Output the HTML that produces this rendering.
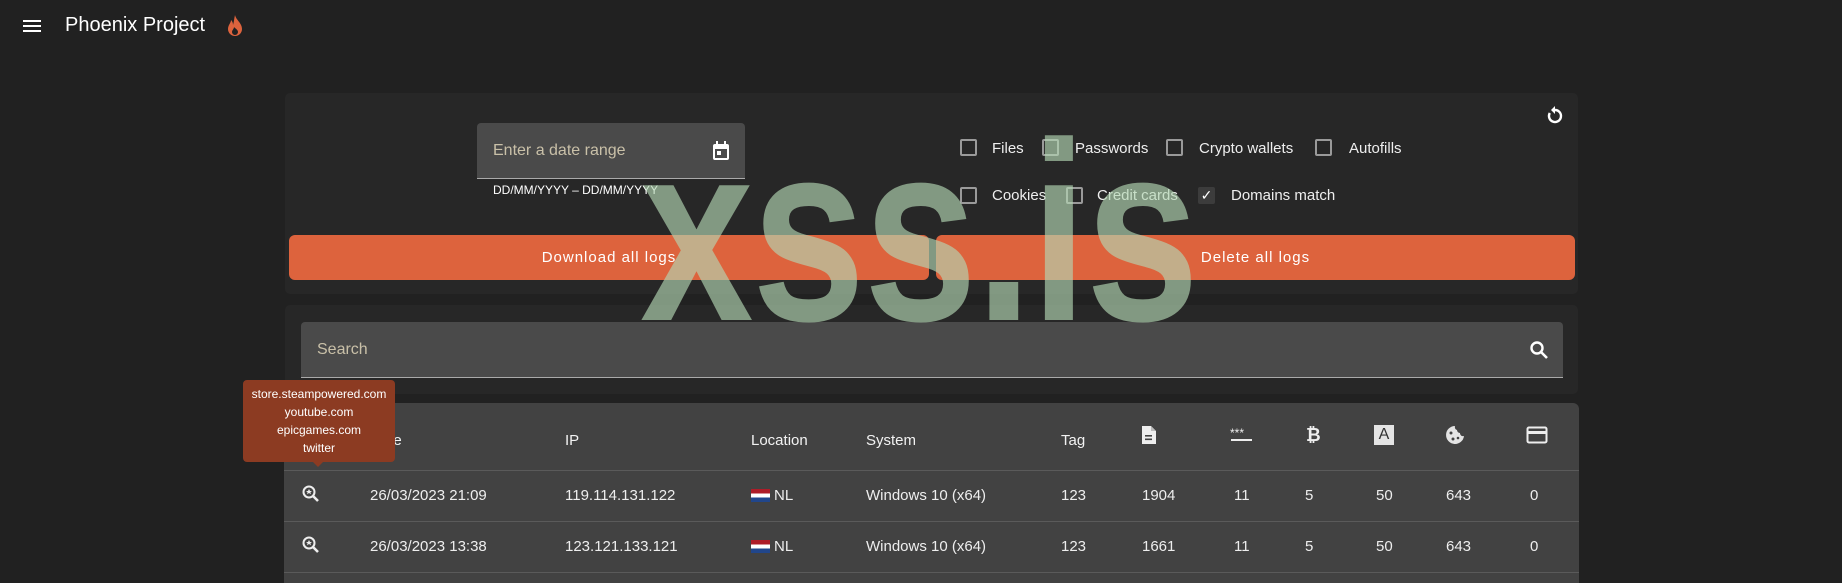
<!DOCTYPE html>
<html><head><meta charset="utf-8"><style>
*{box-sizing:border-box;margin:0;padding:0}
body{width:1842px;height:575px;background:#212121;font-family:"Liberation Sans",sans-serif;color:#eee;position:relative;overflow:hidden;font-size:15px}
.a{position:absolute}
.panel{background:#272727;border-radius:5px}
.field{background:#4a4a4a;border-radius:4px 4px 0 0;border-bottom:1px solid #aaa}
.cb{position:absolute;width:17px;height:17px;border:2px solid #9a9a9a;border-radius:2px}
.btn{position:absolute;top:235px;height:45px;background:#dd633d;border-radius:6px;color:#fff;font-size:15px;letter-spacing:1px;text-align:center;line-height:45px}
.th{position:absolute;top:432px;font-size:15px;color:#f2f2f2}
.td{position:absolute;font-size:15px;color:#eee}
.line{position:absolute;left:284px;width:1295px;height:1px;background:#5a5a5a}
</style></head><body>
<!-- header -->
<div class="a" style="left:23px;top:20px;width:18px;height:2px;background:#fff"></div>
<div class="a" style="left:23px;top:25px;width:18px;height:2px;background:#fff"></div>
<div class="a" style="left:23px;top:30px;width:18px;height:2px;background:#fff"></div>
<div class="a" style="left:65px;top:14px;font-size:20px;color:#fff">Phoenix Project</div>
<svg class="a" style="left:225px;top:14px" width="20" height="24" viewBox="0 0 20 24"><path d="M10 1C11 6 17 9 17 15a7 7 0 0 1-14 0c0-4 3-6 3-9 2 2 2 4 2 5 1-3 1-6 2-10z" fill="#dd633d"/><path d="M10 21a3 3 0 0 1-3-3c0-2 2-3 2-5 2 2 4 3 4 5a3 3 0 0 1-3 3z" fill="#212121"/></svg>

<!-- panel 1 -->
<div class="a panel" style="left:285px;top:93px;width:1293px;height:201px"></div>
<div class="a field" style="left:477px;top:123px;width:268px;height:56px"></div>
<div class="a" style="left:493px;top:142px;font-size:16px;color:#c9c0a8">Enter a date range</div>
<svg class="a" style="left:711px;top:140px" width="20" height="22" viewBox="0 0 20 22"><rect x="2" y="4" width="16" height="16" rx="2" fill="#fff"/><rect x="4" y="9" width="12" height="9" fill="#4a4a4a"/><rect x="6" y="11" width="4" height="4" fill="#fff"/><rect x="5" y="1" width="2" height="4" fill="#fff"/><rect x="13" y="1" width="2" height="4" fill="#fff"/></svg>
<div class="a" style="left:493px;top:183px;font-size:12px;color:#fff">DD/MM/YYYY – DD/MM/YYYY</div>

<div class="cb" style="left:960px;top:139px"></div><div class="a" style="left:992px;top:140px">Files</div>
<div class="cb" style="left:1042px;top:139px"></div><div class="a" style="left:1075px;top:140px">Passwords</div>
<div class="cb" style="left:1166px;top:139px"></div><div class="a" style="left:1199px;top:140px">Crypto wallets</div>
<div class="cb" style="left:1315px;top:139px"></div><div class="a" style="left:1349px;top:140px">Autofills</div>
<div class="cb" style="left:960px;top:187px"></div><div class="a" style="left:992px;top:187px">Cookies</div>
<div class="cb" style="left:1066px;top:187px"></div><div class="a" style="left:1097px;top:187px">Credit cards</div>
<div class="a" style="left:1198px;top:187px;width:17px;height:17px;background:#3c3c3c;border-radius:2px;color:#fff;font-size:14px;text-align:center;line-height:17px">✓</div>
<div class="a" style="left:1231px;top:187px">Domains match</div>
<svg class="a" style="left:1545px;top:106px" width="20" height="20" viewBox="0 0 20 20"><path d="M10 4a6 6 0 1 1-5.2 3" fill="none" stroke="#fff" stroke-width="2.4"/><path d="M10 0v8l-4-4z" fill="#fff"/></svg>

<div class="btn" style="left:289px;width:640px">Download all logs</div>
<div class="btn" style="left:936px;width:639px">Delete all logs</div>

<!-- panel 2 search -->
<div class="a panel" style="left:285px;top:305px;width:1293px;height:89px"></div>
<div class="a field" style="left:301px;top:322px;width:1262px;height:56px"></div>
<div class="a" style="left:317px;top:341px;font-size:16px;color:#c9c0a8">Search</div>
<svg class="a" style="left:1529px;top:340px" width="20" height="20" viewBox="0 0 20 20"><circle cx="8" cy="8" r="5.5" fill="none" stroke="#fff" stroke-width="2.4"/><path d="M12 12l6 6" stroke="#fff" stroke-width="2.6"/></svg>

<!-- table -->
<div class="a" style="left:284px;top:403px;width:1295px;height:180px;background:#424242;border-radius:6px 6px 0 0"></div>
<div class="th" style="left:370px">Date</div>
<div class="th" style="left:565px">IP</div>
<div class="th" style="left:751px">Location</div>
<div class="th" style="left:866px">System</div>
<div class="th" style="left:1061px">Tag</div>
<svg class="a" style="left:1141px;top:425px" width="16" height="20" viewBox="0 0 16 20"><path d="M1 1h9l5 5v13H1z" fill="#eee"/><path d="M10 1v5h5" fill="#bbb"/><rect x="4" y="10" width="7" height="1.6" fill="#424242"/><rect x="4" y="13.5" width="7" height="1.6" fill="#424242"/></svg>
<svg class="a" style="left:1230px;top:428px" width="24" height="14" viewBox="0 0 24 14"><text x="0" y="9" font-size="12" fill="#eee" font-family="Liberation Sans">***</text><rect x="1" y="11" width="21" height="2" fill="#eee"/></svg>
<div class="a" style="left:1306px;top:425px;font-size:18px;font-weight:bold;color:#eee">₿</div>
<div class="a" style="left:1374px;top:425px;width:20px;height:20px;background:#e4e4e4;color:#333;font-size:16px;text-align:center;line-height:20px">A</div>
<svg class="a" style="left:1444px;top:424px" width="22" height="22" viewBox="0 0 22 22"><path d="M11 2a9 9 0 1 0 9 10 3 3 0 0 1-4-3 3 3 0 0 1-3-3 3 3 0 0 1-2-4z" fill="#e4e4e4"/><circle cx="7" cy="9" r="1.5" fill="#424242"/><circle cx="9" cy="15" r="1.5" fill="#424242"/><circle cx="14" cy="14" r="1.3" fill="#424242"/></svg>
<svg class="a" style="left:1526px;top:426px" width="22" height="18" viewBox="0 0 22 18"><rect x="1.5" y="1.5" width="19" height="15" rx="1.5" fill="none" stroke="#eee" stroke-width="2"/><rect x="2" y="5" width="18" height="3" fill="#eee"/></svg>
<div class="line" style="top:470px"></div>
<div class="line" style="top:521px"></div>
<div class="line" style="top:572px"></div>

<svg class="a" style="left:301px;top:484px" width="20" height="20" viewBox="0 0 20 20"><circle cx="8" cy="8" r="5.5" fill="none" stroke="#eee" stroke-width="2"/><path d="M12 12l5 5" stroke="#eee" stroke-width="2.6"/><path d="M8 5l1 2h2l-1.6 1.3.6 2L8 9l-2 1.3.6-2L5 7h2z" fill="#eee"/></svg>
<div class="td" style="left:370px;top:487px">26/03/2023 21:09</div>
<div class="td" style="left:565px;top:487px">119.114.131.122</div>
<div class="a" style="left:751px;top:489px;width:19px;height:13px;background:linear-gradient(#ae1c28 33%,#fff 33%,#fff 66%,#21468b 66%)"></div>
<div class="td" style="left:774px;top:487px">NL</div>
<div class="td" style="left:866px;top:487px">Windows 10 (x64)</div>
<div class="td" style="left:1061px;top:487px">123</div>
<div class="td" style="left:1142px;top:487px">1904</div>
<div class="td" style="left:1234px;top:487px">11</div>
<div class="td" style="left:1305px;top:487px">5</div>
<div class="td" style="left:1376px;top:487px">50</div>
<div class="td" style="left:1446px;top:487px">643</div>
<div class="td" style="left:1530px;top:487px">0</div>

<svg class="a" style="left:301px;top:535px" width="20" height="20" viewBox="0 0 20 20"><circle cx="8" cy="8" r="5.5" fill="none" stroke="#eee" stroke-width="2"/><path d="M12 12l5 5" stroke="#eee" stroke-width="2.6"/><path d="M8 5l1 2h2l-1.6 1.3.6 2L8 9l-2 1.3.6-2L5 7h2z" fill="#eee"/></svg>
<div class="td" style="left:370px;top:538px">26/03/2023 13:38</div>
<div class="td" style="left:565px;top:538px">123.121.133.121</div>
<div class="a" style="left:751px;top:540px;width:19px;height:13px;background:linear-gradient(#ae1c28 33%,#fff 33%,#fff 66%,#21468b 66%)"></div>
<div class="td" style="left:774px;top:538px">NL</div>
<div class="td" style="left:866px;top:538px">Windows 10 (x64)</div>
<div class="td" style="left:1061px;top:538px">123</div>
<div class="td" style="left:1142px;top:538px">1661</div>
<div class="td" style="left:1234px;top:538px">11</div>
<div class="td" style="left:1305px;top:538px">5</div>
<div class="td" style="left:1376px;top:538px">50</div>
<div class="td" style="left:1446px;top:538px">643</div>
<div class="td" style="left:1530px;top:538px">0</div>

<!-- tooltip -->
<div class="a" style="left:243px;top:380px;width:152px;height:82px;background:#8c3b22;border-radius:4px;color:#fff;font-size:12px;text-align:center;line-height:18px;padding-top:5px">store.steampowered.com<br>youtube.com<br>epicgames.com<br>twitter</div>
<div class="a" style="left:313px;top:462px;width:0;height:0;border-left:5px solid transparent;border-right:5px solid transparent;border-top:5px solid #8c3b22"></div>

<!-- watermark -->
<div class="a" style="left:640px;top:105px;font-size:255px;font-weight:bold;color:rgba(180,215,180,0.65);transform:scaleX(0.8);transform-origin:left top;line-height:1;letter-spacing:-2px">xss.is</div>
</body></html>
